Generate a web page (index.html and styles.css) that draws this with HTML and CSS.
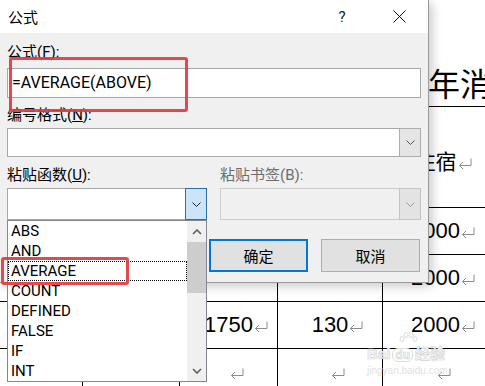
FILE: index.html
```html
<!DOCTYPE html>
<html lang="zh-CN">
<head>
  <meta charset="UTF-8">
  <title>公式</title>
  <link rel="stylesheet" href="styles.css">
</head>
<body>

  <!-- document behind the dialog -->
  <div class="doc">
    <h1 class="doc-title">年消费统计表</h1>
    <table class="sheet">
      <colgroup>
        <col class="c1"><col class="c2"><col class="c3"><col class="c4"><col class="c5">
      </colgroup>
      <tr class="head">
        <td></td><td></td><td></td><td></td>
        <td class="cjk">住宿<svg class="pm" viewBox="0 0 14 11"><path d="M13 0.5V7.5H1.5M5 4L1.5 7.5L5 11"/></svg></td>
      </tr>
      <tr>
        <td></td><td></td><td></td><td></td>
        <td>2000<svg class="pm" viewBox="0 0 14 11"><path d="M13 0.5V7.5H1.5M5 4L1.5 7.5L5 11"/></svg></td>
      </tr>
      <tr>
        <td></td><td></td><td></td><td></td>
        <td>2000<svg class="pm" viewBox="0 0 14 11"><path d="M13 0.5V7.5H1.5M5 4L1.5 7.5L5 11"/></svg></td>
      </tr>
      <tr>
        <td></td><td></td>
        <td>1750<svg class="pm" viewBox="0 0 14 11"><path d="M13 0.5V7.5H1.5M5 4L1.5 7.5L5 11"/></svg></td>
        <td>130<svg class="pm" viewBox="0 0 14 11"><path d="M13 0.5V7.5H1.5M5 4L1.5 7.5L5 11"/></svg></td>
        <td>2000<svg class="pm" viewBox="0 0 14 11"><path d="M13 0.5V7.5H1.5M5 4L1.5 7.5L5 11"/></svg></td>
      </tr>
      <tr>
        <td></td><td></td>
        <td><svg class="pm" viewBox="0 0 14 11"><path d="M13 0.5V7.5H1.5M5 4L1.5 7.5L5 11"/></svg></td>
        <td><svg class="pm" viewBox="0 0 14 11"><path d="M13 0.5V7.5H1.5M5 4L1.5 7.5L5 11"/></svg></td>
        <td><svg class="pm" viewBox="0 0 14 11"><path d="M13 0.5V7.5H1.5M5 4L1.5 7.5L5 11"/></svg></td>
      </tr>
    </table>

    <div class="watermark">
      <svg class="wm-paw" width="22" height="14" viewBox="0 0 22 14">
        <ellipse cx="5" cy="7" rx="2" ry="2.5"/>
        <ellipse cx="9" cy="3" rx="2" ry="2.5"/>
        <ellipse cx="14" cy="3" rx="2" ry="2.5"/>
        <ellipse cx="18" cy="7" rx="2" ry="2.5"/>
      </svg>
      <div class="wm-logo">Bai<span class="wm-du">du</span>经验</div>
      <div class="wm-url">jingyan.baidu.com</div>
    </div>
  </div>

  <!-- formula dialog -->
  <div class="dialog">
    <div class="titlebar">
      <span>公式</span>
      <span class="help">?</span>
      <span class="close">
        <svg width="13" height="13" viewBox="0 0 13 13"><path d="M0.5 0.5L12.5 12.5M12.5 0.5L0.5 12.5"/></svg>
      </span>
    </div>

    <div class="dlg-body">
      <div class="field-label">公式(<u>F</u>):</div>
      <div class="text-input">=AVERAGE(ABOVE)</div>

      <div class="field-label gap">编号格式(<u>N</u>):</div>
      <div class="combo numfmt">
        <div class="combo-field"></div>
        <div class="combo-btn">
          <svg width="9" height="5" viewBox="0 0 9 5"><path d="M0.5 0.5L4.5 4.5L8.5 0.5"/></svg>
        </div>
      </div>

      <div class="pair">
        <div>
          <div class="field-label">粘贴函数(<u>U</u>):</div>
          <div class="combo func open">
            <div class="combo-field"></div>
            <div class="combo-btn">
              <svg width="9" height="5" viewBox="0 0 9 5"><path d="M0.5 0.5L4.5 4.5L8.5 0.5"/></svg>
            </div>

            <div class="listbox">
              <div class="list-items">
                <div class="item">ABS</div>
                <div class="item">AND</div>
                <div class="item focus">AVERAGE</div>
                <div class="item">COUNT</div>
                <div class="item">DEFINED</div>
                <div class="item">FALSE</div>
                <div class="item">IF</div>
                <div class="item">INT</div>
              </div>
              <div class="scrollbar">
                <div class="sb-btn">
                  <svg width="10" height="6" viewBox="0 0 10 6"><path d="M1 5L5 1L9 5"/></svg>
                </div>
                <div class="sb-thumb"></div>
                <div class="sb-track"></div>
                <div class="sb-btn">
                  <svg width="10" height="6" viewBox="0 0 10 6"><path d="M1 1L5 5L9 1"/></svg>
                </div>
              </div>
            </div>
          </div>
        </div>
        <div>
          <div class="field-label disabled">粘贴书签(B):</div>
          <div class="combo bookmark">
            <div class="combo-field"></div>
            <div class="combo-btn">
              <svg width="9" height="5" viewBox="0 0 9 5"><path d="M0.5 0.5L4.5 4.5L8.5 0.5"/></svg>
            </div>
          </div>
        </div>
      </div>

      <div class="actions">
        <button class="btn default">确定</button>
        <button class="btn">取消</button>
      </div>
    </div>
  </div>

  <!-- red annotation boxes -->
  <div class="mark mark-formula"></div>
  <div class="mark mark-item"></div>

</body>
</html>
```

FILE: styles.css
```css
html, body {
  margin: 0;
  width: 485px;
  height: 386px;
  overflow: hidden;
  background: #ffffff;
}

body {
  position: relative;
  font-family: Roboto, "Noto Sans CJK SC", sans-serif;
  color: #000;
}

/* ---------- document ---------- */

.doc {
  position: relative;
}

.doc-title {
  margin: 0 0 4px 0;
  padding: 62px 0 0 428px;
  height: 40px;
  line-height: 40px;
  font-family: "Noto Sans CJK SC", sans-serif;
  font-size: 32px;
  font-weight: normal;
  white-space: nowrap;
  overflow: hidden;
}

.sheet {
  border-collapse: collapse;
  table-layout: fixed;
  width: 488px;
}

.sheet .c1 { width: 82px; }
.sheet .c2 { width: 97px; }
.sheet .c3 { width: 98px; }
.sheet .c4 { width: 105px; }
.sheet .c5 { width: 106px; }

.sheet td {
  border: 1px solid #000;
  height: 46px;
  padding: 0 0 0 16px;
  text-align: center;
  vertical-align: middle;
  font-family: "Liberation Sans", Arial, sans-serif;
  font-size: 22px;
  white-space: nowrap;
}

.sheet td:first-child {
  border-left: 0;
}

.sheet .head td {
  height: 94px;
  padding-top: 6px;
  font-family: "Noto Sans CJK SC", sans-serif;
  font-size: 21px;
}

.pm {
  width: 14px;
  height: 11px;
  margin-left: 1px;
  fill: none;
  stroke: #8c8c8c;
  stroke-width: 1;
}

.watermark {
  position: absolute;
  left: 367px;
  top: 332px;
  width: 90px;
  color: #fafafa;
  font-family: "Liberation Sans", "Noto Sans CJK SC", sans-serif;
}

.wm-paw {
  display: block;
  margin-left: 30px;
  fill: none;
  stroke: #dcdcdc;
  stroke-width: 1;
}

.wm-logo {
  font-size: 15px;
  font-weight: bold;
  line-height: 15px;
  -webkit-text-stroke: 0.7px #d6d6d6;
  white-space: nowrap;
}

.wm-du {
  display: inline-block;
  margin: 0 2px;
  padding: 0 2px;
  border: 1px solid #dcdcdc;
  border-radius: 6px;
  font-size: 12px;
  line-height: 12px;
}

.wm-url {
  margin-top: 3px;
  font-size: 10px;
  line-height: 12px;
  color: #e2e2e2;
}

/* ---------- dialog ---------- */

.dialog {
  position: absolute;
  top: 0;
  left: 0;
  width: 428px;
  background: #f0f0f0;
  border-right: 1px solid #9a9a9a;
  border-bottom: 1px solid #9a9a9a;
  box-shadow: 3px 3px 10px rgba(0, 0, 0, 0.22);
  font-size: 15px;
}

.titlebar {
  height: 33px;
  background: #ffffff;
  display: flex;
  align-items: center;
  padding-left: 8px;
}

.titlebar .help {
  margin-left: auto;
  margin-right: 19px;
  width: 30px;
  text-align: center;
  color: #222;
}

.titlebar .close {
  width: 46px;
  margin-right: 6px;
  display: flex;
  justify-content: center;
}

.titlebar .close svg {
  fill: none;
  stroke: #111;
  stroke-width: 1;
}

.dlg-body {
  padding: 9px 7px 10px 7px;
}

.field-label {
  height: 20px;
  line-height: 20px;
  white-space: nowrap;
}

.field-label.gap {
  margin-top: 7px;
}

.field-label.disabled {
  color: #6d6d6d;
}

.text-input {
  margin-top: 6px;
  height: 30px;
  box-sizing: border-box;
  border: 1px solid #a8a8a8;
  background: #fff;
  padding: 0 4px;
  line-height: 27px;
  font-size: 16px;
}

.combo {
  position: relative;
  display: flex;
  height: 32px;
  margin-top: 3px;
}

.combo.numfmt {
  height: 29px;
}

.combo-field {
  flex: 1;
  background: #fff;
  border: 1px solid #a8a8a8;
  border-right: 0;
}

.combo-btn {
  width: 20px;
  background: #e5e5e5;
  border: 1px solid #adadad;
  display: flex;
  align-items: center;
  justify-content: center;
}

.combo-btn svg {
  fill: none;
  stroke: #555;
  stroke-width: 1;
}

.combo.func .combo-btn {
  background: #cce4f7;
  border-color: #2c6ea6;
}

.combo.func .combo-btn svg {
  stroke: #222;
}

.combo.bookmark .combo-field {
  background: #f0f0f0;
  border-color: #cccccc;
}

.combo.bookmark .combo-btn {
  background: #e3e3e3;
  border-color: #c4c4c4;
}

.combo.bookmark .combo-btn svg {
  stroke: #9a9a9a;
}

.pair {
  display: grid;
  grid-template-columns: 200px 201px;
  column-gap: 13px;
  margin-top: 8px;
}

.listbox {
  position: absolute;
  top: 100%;
  left: 0;
  z-index: 2;
  width: 200px;
  height: 162px;
  box-sizing: border-box;
  border: 1px solid #828790;
  background: #fff;
  display: flex;
}

.list-items {
  flex: 1;
}

.item {
  height: 20px;
  line-height: 20px;
  padding-left: 3px;
  box-sizing: border-box;
}

.item.focus {
  border: 1px dotted #000;
  padding-left: 2px;
  line-height: 18px;
}

.scrollbar {
  width: 19px;
  background: #f0f0f0;
  display: flex;
  flex-direction: column;
}

.sb-btn {
  height: 21px;
  display: flex;
  align-items: center;
  justify-content: center;
}

.sb-btn svg {
  fill: none;
  stroke: #606060;
  stroke-width: 1.6;
}

.sb-thumb {
  height: 51px;
  background: #cdcdcd;
}

.sb-track {
  flex: 1;
}

.actions {
  display: flex;
  justify-content: flex-end;
  gap: 13px;
  margin-top: 19px;
  padding-right: 1px;
}

.btn {
  width: 99px;
  height: 33px;
  background: #e1e1e1;
  border: 1px solid #adadad;
  font-family: Roboto, "Noto Sans CJK SC", sans-serif;
  font-size: 15px;
  color: #000;
  padding: 0;
}

.btn.default {
  border: 2px solid #0078d7;
}

/* ---------- annotations ---------- */

.mark {
  position: absolute;
  box-sizing: border-box;
  border: 3px solid rgba(228, 56, 62, 0.92);
  border-radius: 3px;
  z-index: 3;
}

.mark-formula {
  left: 9px;
  top: 57px;
  width: 179px;
  height: 55px;
}

.mark-item {
  left: 1px;
  top: 257px;
  width: 128px;
  height: 28px;
}
```
